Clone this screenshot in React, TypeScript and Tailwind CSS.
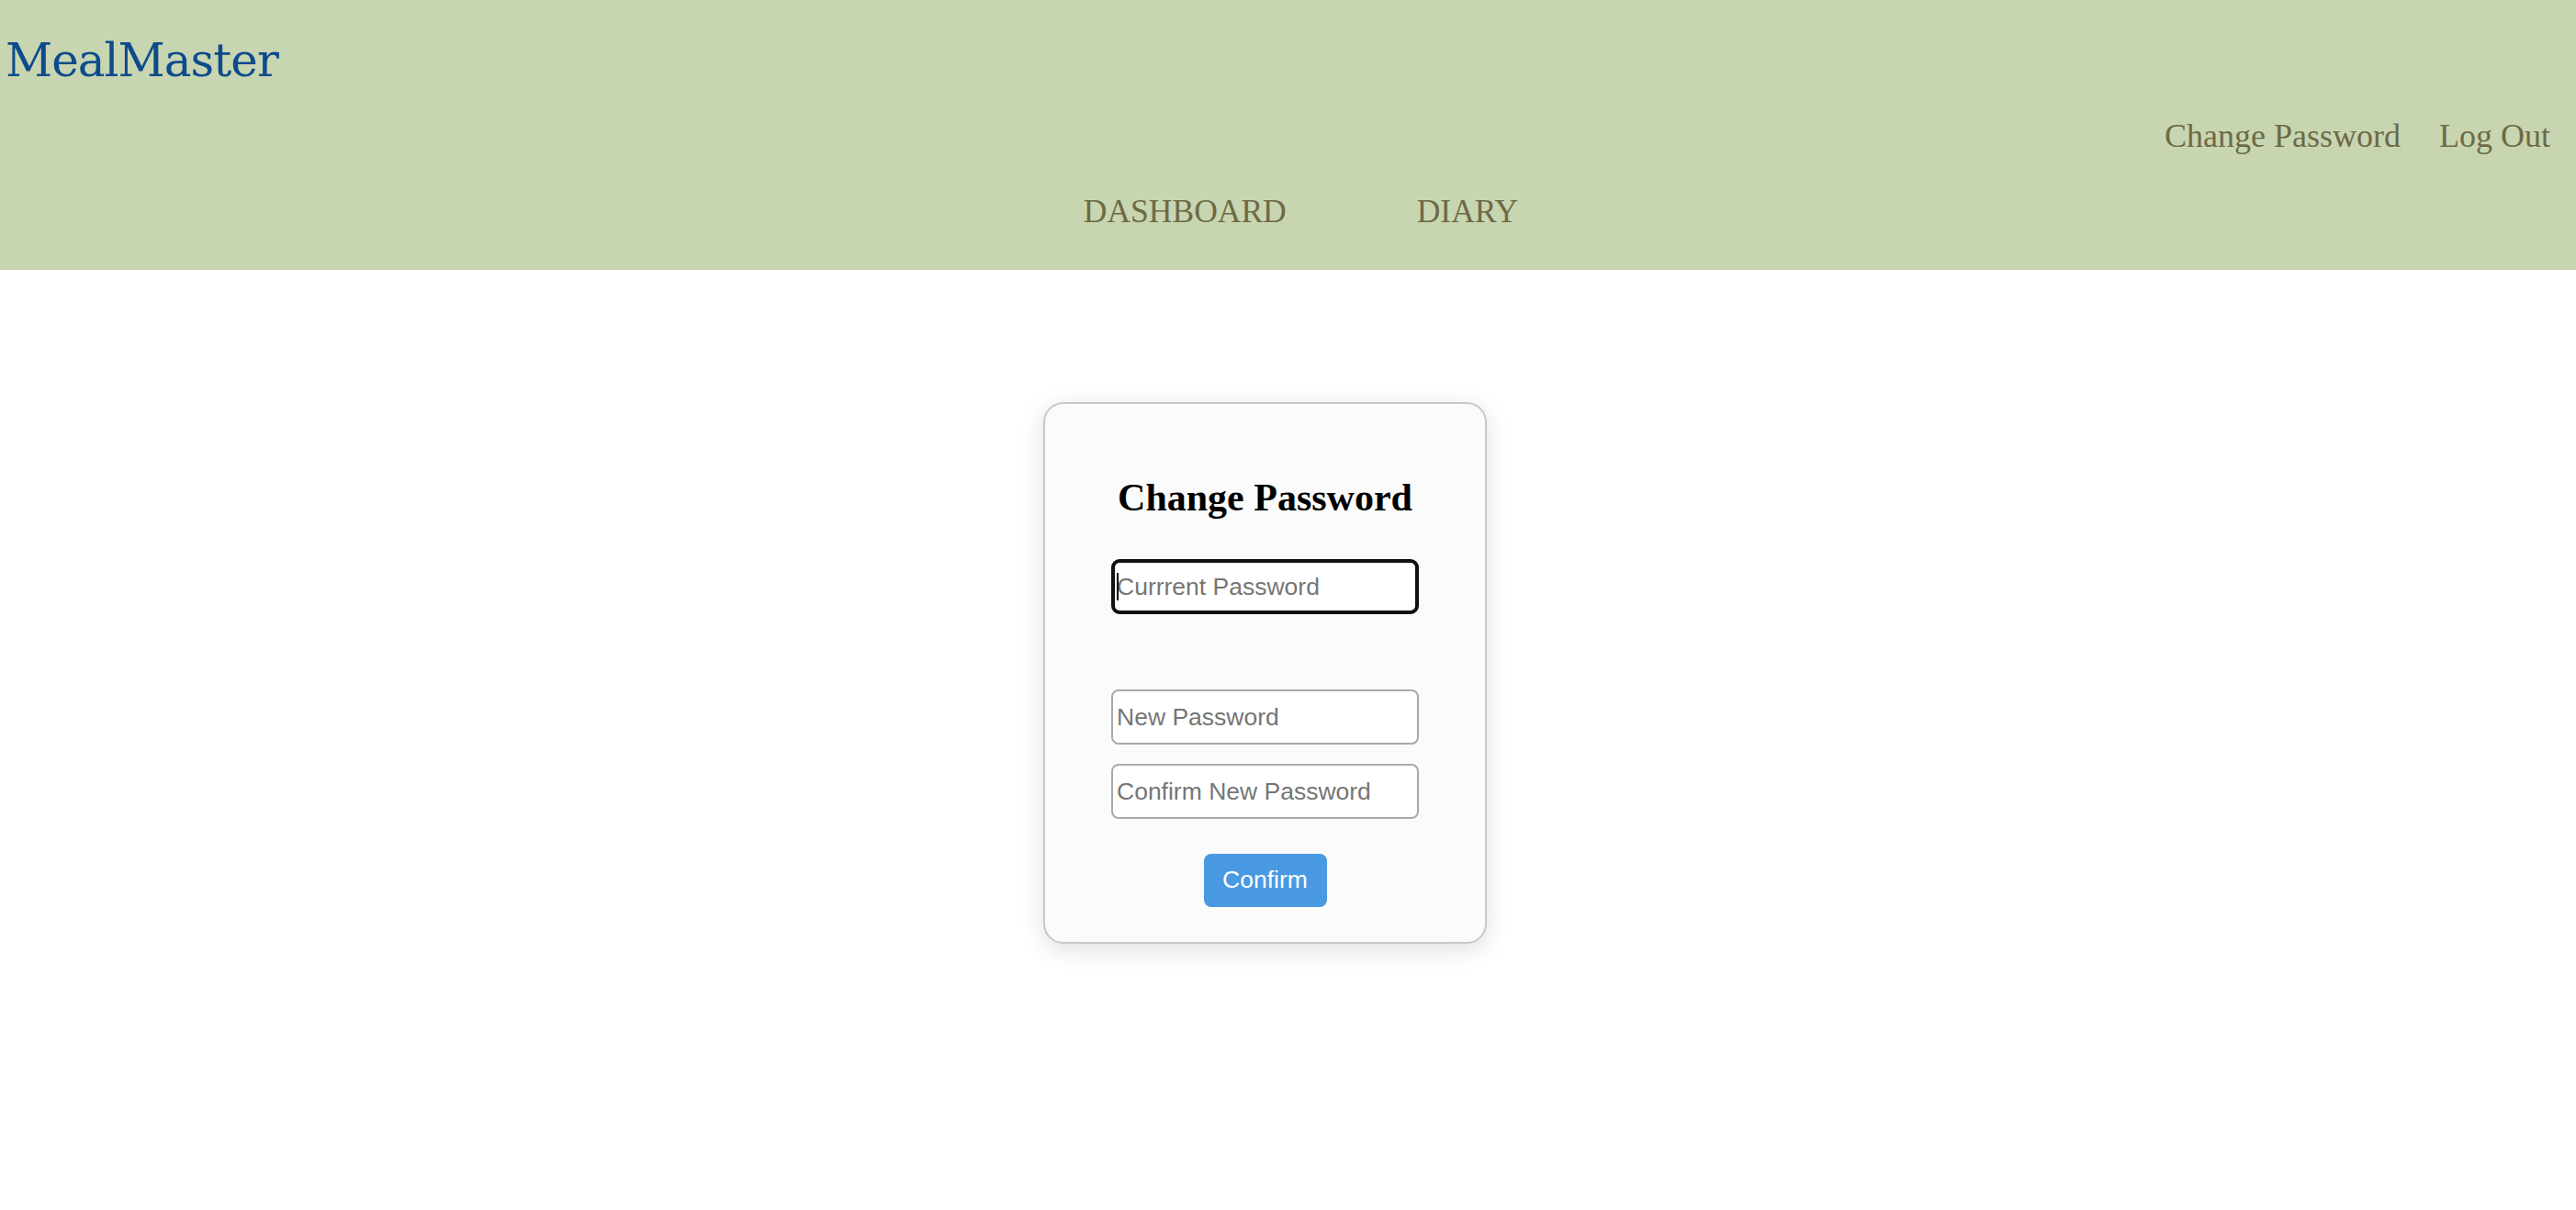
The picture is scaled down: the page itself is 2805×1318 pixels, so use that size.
import React from "react";

const serif = "font-['Liberation_Serif','Times_New_Roman',serif]";
const sans = "font-['Liberation_Sans',Arial,sans-serif]";

function Header() {
  return (
    <header className="h-[294px] bg-[#c8d5b1] pt-[36px]">
      <div className="h-[60px] pl-[6px]">
        <span className="font-['DejaVu_Serif',Georgia,serif] text-[50px] leading-[60px] tracking-[-1px] text-[#0d4c8b]">
          MealMaster
        </span>
      </div>
      <nav className={`${serif} mt-[32px] flex h-[40px] justify-end gap-[42px] pr-[28px] text-[36px] leading-[40px] text-[#6d6a45]`}>
        <a href="#">Change Password</a>
        <a href="#">Log Out</a>
      </nav>
      <nav className={`${serif} mt-[42px] flex h-[40px] justify-center gap-[142px] pl-[28px] text-[35.5px] leading-[40px] text-[#6d6a45]`}>
        <a href="#">DASHBOARD</a>
        <a href="#">DIARY</a>
      </nav>
    </header>
  );
}

function PasswordCard() {
  const field =
    "h-[60px] w-[335px] rounded-[8px] border-2 border-[#a9a9a9] bg-white pl-[4px] text-[26.5px] text-black outline-none placeholder:text-[#757575]";

  return (
    <div className="flex w-[483px] flex-col items-center rounded-[22px] border-2 border-[#c8c8c8] bg-[#fbfbfb] pb-[38px] pt-[78px] shadow-[0_6px_26px_rgba(0,0,0,0.13)]">
      <h2 className={`${serif} h-[48px] text-[42px] font-bold leading-[48px] text-black`}>
        Change Password
      </h2>
      <div className="relative mt-[43px]">
        <input
          type="password"
          placeholder="Currrent Password"
          className={`${sans} h-[60px] w-[335px] rounded-[9px] border-[4px] border-[#111] bg-white pl-[2px] text-[26.5px] text-black outline-none placeholder:text-[#757575]`}
        />
        <span className="absolute left-[6px] top-[15px] h-[30px] w-[2px] bg-black" />
      </div>
      <input type="password" placeholder="New Password" className={`${sans} ${field} mt-[82px]`} />
      <input type="password" placeholder="Confirm New Password" className={`${sans} ${field} mt-[21px]`} />
      <button
        type="button"
        className={`${sans} mt-[38px] h-[58px] w-[134px] rounded-[8px] bg-[#4a99e3] text-[26.5px] text-white`}
      >
        Confirm
      </button>
    </div>
  );
}

export default function App() {
  return (
    <div className="min-h-[1318px] bg-white">
      <Header />
      <main className="flex justify-center pr-[50px] pt-[144px]">
        <PasswordCard />
      </main>
    </div>
  );
}
